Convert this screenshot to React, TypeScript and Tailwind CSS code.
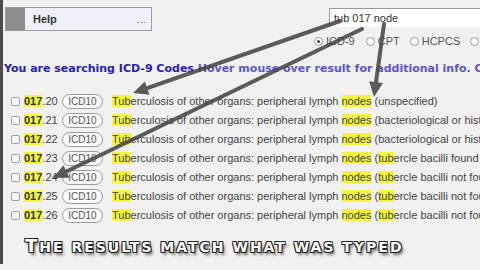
import React from "react";

type Row = { code: string; rest: string };

const rows: Row[] = [
  { code: ".20", rest: "(unspecified)" },
  { code: ".21", rest: "(bacteriological or histological examination not done)" },
  { code: ".22", rest: "(bacteriological or histological examination unknown (at present))" },
  { code: ".23", rest: "(tubercle bacilli found (in sputum) by microscopy)" },
  { code: ".24", rest: "(tubercle bacilli not found (in sputum) by microscopy, but found by bacterial culture)" },
  { code: ".25", rest: "(tubercle bacilli not found by bacteriological examination, but tuberculosis confirmed histologically)" },
  { code: ".26", rest: "(tubercle bacilli not found by bacteriological or histological examination, but tuberculosis confirmed by other methods)" },
];

function Rest({ text }: { text: string }) {
  if (text.startsWith("(tub")) {
    return (
      <>
        (<span className="bg-[#f4f53c]">tub</span>
        {text.slice(4)}
      </>
    );
  }
  return <>{text}</>;
}

const arrows = [
  { x1: 340, y1: 21, x2: 133, y2: 93 },
  { x1: 362, y1: 29, x2: 53, y2: 178 },
  { x1: 384, y1: 24, x2: 374, y2: 97 },
];

function Arrows() {
  return (
    <svg
      className="absolute inset-0 pointer-events-none"
      width="480"
      height="270"
      viewBox="0 0 480 270"
    >
      {arrows.map((a, i) => {
        const dx = a.x2 - a.x1;
        const dy = a.y2 - a.y1;
        const len = Math.hypot(dx, dy);
        const ux = dx / len;
        const uy = dy / len;
        const nx = -uy;
        const ny = ux;
        const bx = a.x2 - ux * 15;
        const by = a.y2 - uy * 15;
        const lx = a.x2 - ux * 12;
        const ly = a.y2 - uy * 12;
        const pts = `${a.x2},${a.y2} ${bx + nx * 7},${by + ny * 7} ${bx - nx * 7},${by - ny * 7}`;
        return (
          <g key={i} opacity={0.88}>
            <line
              x1={a.x1}
              y1={a.y1}
              x2={lx}
              y2={ly}
              stroke="#474747"
              strokeWidth={4}
              strokeLinecap="round"
            />
            <polygon points={pts} fill="#474747" />
          </g>
        );
      })}
    </svg>
  );
}

function Radio({ checked }: { checked?: boolean }) {
  return (
    <span className="w-[9px] h-[9px] rounded-full border border-[#9a9a9a] bg-white flex items-center justify-center shrink-0">
      {checked && <span className="w-[3px] h-[3px] rounded-full bg-[#444]" />}
    </span>
  );
}

export default function App() {
  return (
    <div className="relative w-[480px] h-[270px] overflow-hidden bg-[#f1f1f1] flex font-['Liberation_Sans',Arial,sans-serif]">
      <div className="w-[3px] h-[264px] bg-[#4b4b4b] shrink-0" />
      <div className="flex-1 flex flex-col min-w-0">
        {/* header */}
        <div className="flex h-[50px]">
          <div className="ml-[2px] mt-[7px] w-[147px] h-[24px] border border-[#9c9c9c] flex bg-[#efeff9] shrink-0">
            <div className="w-[19px] bg-[#8d8d8d]" />
            <div className="flex-1 flex items-center justify-between pl-[8px] pr-[5px] text-[11px] font-bold text-[#333]">
              <span>Help</span>
              <span className="text-[#777] font-normal">...</span>
            </div>
          </div>
          <div className="ml-auto w-[166px] flex flex-col pt-[8px] shrink-0">
            <div className="ml-[15px] h-[19px] bg-white border-t border-l border-[#9a9a9a] pl-[4px] flex items-center text-[11px] text-[#333]">
              tub 017 node
            </div>
            <div className="mt-[6px] flex items-center text-[11px] text-[#555] whitespace-nowrap">
              <Radio checked />
              <span className="ml-[3px]">ICD-9</span>
              <span className="ml-[11px]"><Radio /></span>
              <span className="ml-[3px]">CPT</span>
              <span className="ml-[10px]"><Radio /></span>
              <span className="ml-[3px]">HCPCS</span>
              <span className="ml-[10px]"><Radio /></span>
            </div>
          </div>
        </div>

        {/* blue line */}
        <div className="pt-[12px] pl-[1px] text-[11px] leading-[13px] font-bold whitespace-nowrap font-['DejaVu_Sans',Verdana,sans-serif]">
          <span className="text-[#2a20b4]">You are searching ICD-9 Codes </span>
          <span className="text-[#5d55cc]">Hover mouse over result for additional info. Click</span>
        </div>

        {/* rows */}
        <div className="mt-[17px] flex flex-col">
          {rows.map((r) => (
            <div key={r.code} className="h-[19px] flex items-center whitespace-nowrap text-[11px] text-[#444]">
              <span className="ml-[8px] w-[9px] h-[9px] border border-[#a0a0a0] rounded-[2px] bg-white shrink-0" />
              <span className="ml-[4px] w-[38px] shrink-0">
                <span className="bg-[#f4f53c] font-bold text-[#333]">017</span>
                <span>{r.code}</span>
              </span>
              <span className="w-[41px] h-[15px] rounded-full border border-[#9a9a9a] bg-[#fafafa] flex items-center justify-center text-[10px] text-[#555] shrink-0">
                ICD10
              </span>
              <span className="ml-[9px]">
                <span className="bg-[#f4f53c]">Tub</span>erculosis of other organs: peripheral lymph{" "}
                <span className="bg-[#f4f53c]">nodes</span> <Rest text={r.rest} />
              </span>
            </div>
          ))}
        </div>

        {/* caption */}
        <div className="mt-[11px] ml-[22px] flex items-baseline font-bold text-white whitespace-nowrap tracking-[2px] font-['DejaVu_Sans',Verdana,sans-serif] [text-shadow:1px_1px_0_#222,-1px_-1px_0_#222,1px_-1px_0_#222,-1px_1px_0_#222,2px_3px_3px_rgba(0,0,0,0.6)]">
          <span className="text-[18px] leading-[20px]">T</span>
          <span className="text-[14px] leading-[20px]">HE RESULTS MATCH WHAT WAS TYPED</span>
        </div>
      </div>
      <Arrows />
    </div>
  );
}
